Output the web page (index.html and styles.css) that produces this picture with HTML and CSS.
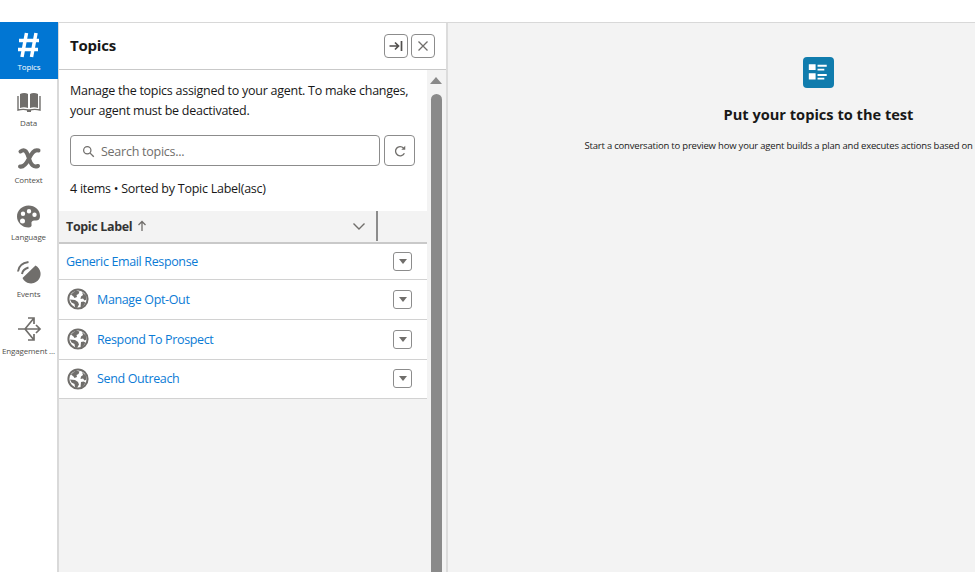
FILE: index.html
```html
<!DOCTYPE html>
<html lang="en">
<head>
<meta charset="utf-8">
<title>Topics</title>
<link rel="stylesheet" href="styles.css">
</head>
<body>
<div class="topbar"></div>
<div class="main">
  <nav class="rail">
    <div class="rail-item active">
      <svg class="rail-icon" viewBox="0 0 28 26"><path d="M11.500 1 7 25M21 1l-4.500 24M4 8.500h20M3 17.500h20" fill="none" stroke="#fff" stroke-width="3.500"/></svg>
      <span>Topics</span>
    </div>
    <div class="rail-item">
      <svg class="rail-icon" viewBox="0 0 28 26"><path d="M5 5c2.500-1.200 6-1.200 8 0v14c-2.500-1-5.500-1-8 0zM15 5c2-1.200 5.500-1.200 8 0v14c-2.500-1-5.500-1-8 0z" fill="#706e6b"/><path d="M3 7v14c3.500-.8 7-.8 10 0h2c3-.8 6.500-.8 10 0V7" fill="none" stroke="#706e6b" stroke-width="1.400"/><path d="M12 21h4v2h-4z" fill="#706e6b"/></svg>
      <span>Data</span>
    </div>
    <div class="rail-item">
      <svg class="rail-icon" viewBox="0 0 28 26"><path d="M5.500 5.500C10 2 12 6 14 12.500s4.500 9 9 7.500M23.500 4.500C19 3 16.500 7.500 14 12.500s-5 9-9 8" fill="none" stroke="#706e6b" stroke-width="4" stroke-linecap="round"/></svg>
      <span>Context</span>
    </div>
    <div class="rail-item">
      <svg class="rail-icon" viewBox="0 0 28 26"><path transform="translate(-.5 -.5)" fill-rule="evenodd" d="M14 3C7.500 3 2.500 8 2.500 14S7.500 25 14 25c2.500 0 3.500-1.500 3-3.500-.5-2.500 1-3.800 3.500-3.500 3 .4 5-.8 5-4.500C25.500 7.500 20.500 3 14 3zM8.500 9a2.200 2.200 0 1 1 0 4.400 2.200 2.200 0 0 1 0-4.400zm6-2.500a2.200 2.200 0 1 1 0 4.400 2.200 2.200 0 0 1 0-4.400zm5.500 3.500a2.200 2.200 0 1 1 0 4.400 2.200 2.200 0 0 1 0-4.400zM8 16a2.500 2.500 0 1 1 0 5 2.500 2.500 0 0 1 0-5z" fill="#706e6b"/></svg>
      <span>Language</span>
    </div>
    <div class="rail-item">
      <svg class="rail-icon" viewBox="0 0 28 26"><path d="M7.500 18 20.500 5.500A9.500 9.500 0 1 1 7.500 18z" fill="#706e6b"/><path d="M3 11.500C3.500 6.500 7 3 13.500 2M7 14c.5-3.500 3-5.500 6.500-6.500" fill="none" stroke="#706e6b" stroke-width="2"/></svg>
      <span>Events</span>
    </div>
    <div class="rail-item">
      <svg class="rail-icon" viewBox="0 0 28 26"><path d="M3 12h22M21 8l4 4-4 4M10 12l9-11M13 1h6v6M10 12l9 11M13 23h6v-6" fill="none" stroke="#706e6b" stroke-width="1.700"/></svg>
      <span>Engagement ...</span>
    </div>
  </nav>

  <section class="panel">
    <header class="panel-head">
      <h1>Topics</h1>
      <div class="head-actions">
        <button class="icon-btn" aria-label="Collapse"><svg viewBox="0 0 16 16"><path d="M1.500 8h8.500M7 4.500 10.500 8 7 11.500M13.500 3v10" fill="none" stroke="#514f4d" stroke-width="1.700"/></svg></button>
        <button class="icon-btn" aria-label="Close"><svg viewBox="0 0 16 16"><path d="m3.500 3.500 9 9m0-9-9 9" fill="none" stroke="#706e6b" stroke-width="1.300"/></svg></button>
      </div>
    </header>
    <div class="panel-scroll">
      <div class="panel-body">
        <p class="intro">Manage the topics assigned to your agent. To make changes, your agent must be deactivated.</p>
        <div class="search-row">
          <div class="search">
            <svg viewBox="0 0 16 16"><circle cx="6.500" cy="6.500" r="4.500" fill="none" stroke="#706e6b" stroke-width="1.500"/><path d="m10 10 4.500 4.500" stroke="#706e6b" stroke-width="1.700"/></svg>
            <span>Search topics...</span>
          </div>
          <button class="refresh" aria-label="Refresh"><svg viewBox="0 0 16 16"><path d="M13 10.500A5.300 5.300 0 1 1 12 4.500" fill="none" stroke="#706e6b" stroke-width="1.500"/><path d="M9.500 6.500h4.500V2z" fill="#706e6b"/></svg></button>
        </div>
        <p class="meta">4 items • Sorted by Topic Label(asc)</p>
        <div class="table">
          <div class="thead">
            <div class="th-label">
              <span>Topic Label</span>
              <svg class="arrow" viewBox="0 0 10 12"><path d="M5 11V2M1.500 5 5 1.500 8.500 5" fill="none" stroke="#706e6b" stroke-width="1.300"/></svg>
              <svg class="chev" viewBox="0 0 14 10"><path d="m1.500 2.500 5.500 5.500 5.500-5.500" fill="none" stroke="#706e6b" stroke-width="1.400"/></svg>
            </div>
            <div class="th-act"></div>
          </div>
          <div class="row first">
            <a>Generic Email Response</a>
            <button class="menu-btn" aria-label="Actions"><i></i></button>
          </div>
          <div class="row">
            <svg class="globe" viewBox="0 0 22 22"><use href="#globe"/></svg>
            <a>Manage Opt-Out</a>
            <button class="menu-btn" aria-label="Actions"><i></i></button>
          </div>
          <div class="row">
            <svg class="globe" viewBox="0 0 22 22"><use href="#globe"/></svg>
            <a>Respond To Prospect</a>
            <button class="menu-btn" aria-label="Actions"><i></i></button>
          </div>
          <div class="row last">
            <svg class="globe" viewBox="0 0 22 22"><use href="#globe"/></svg>
            <a>Send Outreach</a>
            <button class="menu-btn" aria-label="Actions"><i></i></button>
          </div>
        </div>
      </div>
      <div class="scrollbar">
        <div class="scroll-up"></div>
        <div class="scroll-thumb"></div>
      </div>
    </div>
  </section>

  <section class="preview">
    <div class="preview-inner">
      <div class="preview-icon">
        <svg viewBox="0 0 32 32"><path d="M6 7.500h7v6H6zM6 16.800h7v6.400H6zM15 8h9.500v2H15zM15 12h7v2h-7zM15 17.500h9.500v2H15zM15 21.300h7v1.900h-7z" fill="#fff"/></svg>
      </div>
      <h2>Put your topics to the test</h2>
      <p>Start a conversation to preview how your agent builds a plan and executes actions based on</p>
    </div>
  </section>
</div>
<svg class="defs" width="0" height="0"><defs><g id="globe"><circle cx="11" cy="11" r="9.600" fill="#fff" stroke="#706e6b" stroke-width="2"/><path d="M4 6.500 8.500 2.500l4 1-1 2.500-2 1 .5 2-2.500 1-1-1.500zM3 11.500l5 .5 3 2 1 2.500-2 3.500-2-1-.5-3-3-1.500zM15 4l4 3.500.5 4-2 1-1.500-2-2.500.5.500-2.500 2-1.500zM14 14l2.500-.5 2 1-2.500 4-2.500 1z" fill="#706e6b"/></g></defs></svg>
</body>
</html>
```

FILE: styles.css
```css
* { box-sizing: border-box; }
html, body { margin: 0; height: 100%; overflow: hidden; }
body { font-family: "Open Sans", "Noto Sans", "Liberation Sans", sans-serif; background: #fff; color: #181818; display: flex; flex-direction: column; }
.defs { position: absolute; }
button { padding: 0; font: inherit; }
.topbar { height: 23px; flex: none; background: #fff; border-bottom: 1px solid #d8d8d8; }
.main { flex: 1; display: flex; min-height: 0; }

.rail { width: 59px; flex: none; margin-top: -1px; background: #fff; border-right: 2px solid #d9d9d9; }
.rail-item { height: 57px; display: flex; flex-direction: column; align-items: center; padding-top: 10px; color: #514f4d; font-size: 8px; line-height: 11px; letter-spacing: -.15px; white-space: nowrap; }
.rail-item span { margin-top: 2px; }
.rail-icon { width: 28px; height: 26px; flex: none; }
.rail-item.active { width: 58px; background: #0176d3; color: #fff; }
.rail-item.active span { margin-top: 3px; }

.panel { width: 389px; flex: none; display: flex; flex-direction: column; background: #f3f3f3; border-right: 2px solid #dcdcdc; }
.panel-head { height: 47px; flex: none; background: #fff; border-bottom: 1px solid #c9c9c9; display: flex; align-items: center; justify-content: space-between; padding: 0 11px 0 11px; }
h1 { margin: -2px 0 0; font-size: 15px; font-weight: 700; color: #181818; letter-spacing: -.2px; }
.head-actions { display: flex; gap: 3px; }
.icon-btn { width: 24px; height: 24px; background: #fff; border: 1px solid #8c8c8c; border-radius: 4px; display: flex; align-items: center; justify-content: center; }
.icon-btn svg { width: 16px; height: 16px; }

.panel-scroll { flex: 1; display: flex; min-height: 0; }
.panel-body { width: 368px; flex: none; }
.intro { margin: 0; padding: 11px 11px 0; background: #fff; font-size: 12.500px; line-height: 19.500px; letter-spacing: -.26px; color: #181818; }
.search-row { background: #fff; display: flex; gap: 4px; padding: 15px 11px 0; }
.search { width: 310px; height: 31px; border: 1px solid #8c8c8c; border-radius: 4px; background: #fff; display: flex; align-items: center; padding: 1px 0 0 11px; gap: 6px; font-size: 12.500px; letter-spacing: -.25px; color: #706e6b; }
.search svg { width: 13px; height: 13px; }
.refresh { width: 31px; height: 31px; background: #fff; border: 1px solid #8c8c8c; border-radius: 4px; display: flex; align-items: center; justify-content: center; }
.refresh svg { width: 14px; height: 14px; }
.meta { margin: 0; background: #fff; padding: 14px 11px 14px; font-size: 12.500px; line-height: 17px; letter-spacing: -.25px; color: #181818; }

.thead { height: 33px; display: flex; background: #f3f3f3; border-bottom: 2px solid #c9c9c9; }
.th-label { flex: 1; display: flex; align-items: center; padding-left: 7px; font-size: 12.500px; font-weight: 700; letter-spacing: -.35px; color: #333; border-right: 2px solid #8c8c8c; margin-bottom: 1px; }
.arrow { width: 10px; height: 12px; margin-left: 5px; }
.chev { width: 14px; height: 10px; margin-left: auto; margin-right: 10px; }
.th-act { width: 49px; flex: none; }
.row { height: 40px; background: #fff; border-bottom: 1px solid #d2d2d2; display: flex; align-items: center; padding: 0 15px 1px 7px; font-size: 12.500px; letter-spacing: -.36px; }
.row.first { height: 36px; }
.row.last { height: 39px; }
.row a { color: #0b7bd5; }
.globe { width: 22px; height: 22px; margin: 0 8px 0 1px; }
.menu-btn { margin-left: auto; width: 19px; height: 19px; background: #fff; border: 1px solid #8c8c8c; border-radius: 3px; display: flex; align-items: center; justify-content: center; }
.menu-btn i { width: 0; height: 0; border-left: 4px solid transparent; border-right: 4px solid transparent; border-top: 5px solid #706e6b; }

.scrollbar { width: 18px; flex: none; background: #f3f3f3; display: flex; flex-direction: column; align-items: center; }
.scroll-up { width: 0; height: 0; margin-top: 7px; border-left: 6px solid transparent; border-right: 6px solid transparent; border-bottom: 7px solid #8a8a8a; }
.scroll-thumb { width: 11px; flex: 1; margin-top: 10px; background: #8a8a8a; border-radius: 6px 6px 0 0; }

.preview { flex: 1; min-width: 0; background: #f3f3f3; overflow: hidden; }
.preview-inner { width: 741px; display: flex; flex-direction: column; align-items: center; padding-top: 34px; }
.preview-icon { width: 31px; height: 31px; flex: none; background: #107cad; border-radius: 4px; }
.preview-icon svg { display: block; width: 31px; height: 31px; }
h2 { margin: 16px 0 0; font-size: 14.600px; line-height: 20px; font-weight: 700; color: #181818; white-space: nowrap; }
.preview p { width: 468px; margin: 15px 0 0; font-size: 9.500px; line-height: 14px; letter-spacing: -.2px; color: #181818; white-space: nowrap; }
```
